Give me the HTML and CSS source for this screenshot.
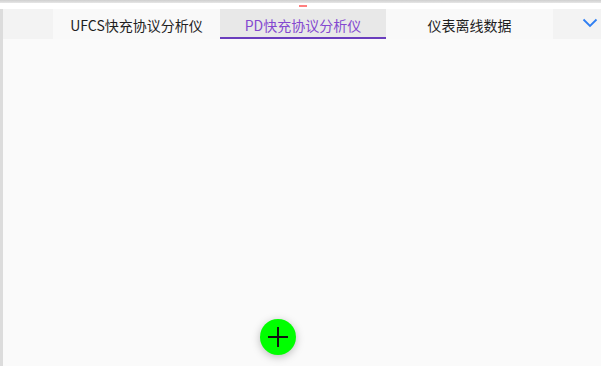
FILE: index.html
```html
<!DOCTYPE html>
<html lang="zh">
<head>
<meta charset="utf-8">
<link rel="stylesheet" href="styles.css">
</head>
<body>
<div class="app">
  <div class="topbar"></div>
  <div class="strip"><span class="marker"></span></div>
  <div class="tabs">
    <div class="tabs-edge"></div>
    <div class="tab">UFCS快充协议分析仪</div>
    <div class="tab active">PD快充协议分析仪</div>
    <div class="tab">仪表离线数据</div>
    <div class="tabs-more">
      <svg width="16" height="10" viewBox="0 0 16 10"><path d="M1.5 1.5 L8 8 L14.5 1.5" fill="none" stroke="#2f7ff2" stroke-width="1.8"/></svg>
    </div>
  </div>
  <div class="content"></div>
  <button class="fab" aria-label="add">
    <svg width="22" height="22" viewBox="0 0 22 22"><path d="M11 1 V21 M1 11 H21" stroke="#111" stroke-width="2"/></svg>
  </button>
</div>
</body>
</html>
```
FILE: styles.css
```css
html, body {
  margin: 0;
  padding: 0;
  width: 601px;
  height: 366px;
  overflow: hidden;
  background: #fafafa;
  font-family: "Noto Sans CJK SC", "Noto Sans", sans-serif;
}
.app {
  position: relative;
  display: flex;
  flex-direction: column;
  height: 366px;
}
.topbar {
  height: 3px;
  background: linear-gradient(#cfcfcf, #e6e6e6);
}
.strip {
  height: 6px;
  background: #ffffff;
  display: flex;
  justify-content: center;
  padding-left: 4px;
}
.marker {
  display: block;
  width: 8px;
  height: 2px;
  margin-top: 2px;
  background: #ff7f7f;
}
.tabs {
  display: flex;
  height: 30px;
  border-left: 3px solid #dcdcdc;
}
.tabs-edge {
  width: 50px;
  background: #f3f3f3;
}
.tab {
  width: 167px;
  display: flex;
  align-items: center;
  justify-content: center;
  font-size: 14px;
  color: #1f1f1f;
  background: #f9f9f9;
  box-sizing: border-box;
  padding-top: 1px;
}
.tab.active {
  width: 166px;
  background: #e8e8e8;
  color: #8448d0;
  border-bottom: 2px solid #6a3dbd;
  padding-top: 3px;
}
.tabs-more {
  flex: 1;
  background: #f3f3f3;
  display: flex;
  align-items: center;
  justify-content: flex-end;
  padding-right: 3px;
  padding-bottom: 3px;
}
.content {
  flex: 1;
  border-left: 3px solid #dcdcdc;
  background: #fafafa;
}
.fab {
  position: absolute;
  left: 260px;
  top: 319px;
  width: 36px;
  height: 36px;
  border: none;
  border-radius: 50%;
  background: #00ff00;
  padding: 0;
  display: flex;
  align-items: center;
  justify-content: center;
  box-shadow: 0 2px 8px rgba(0,0,0,0.25);
}
```
